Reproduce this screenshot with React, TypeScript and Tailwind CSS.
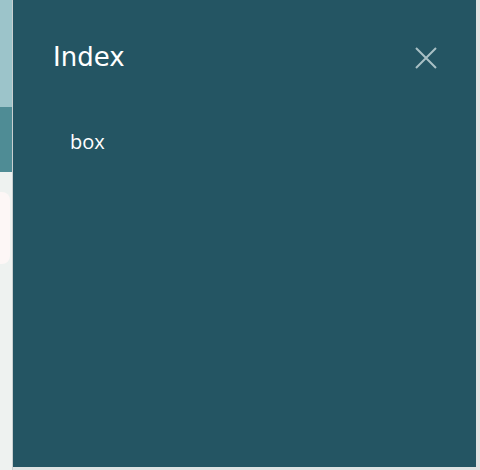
import React from "react";

export default function App() {
  return (
    <div className="flex h-[470px] w-[480px] bg-[#dfe3e3]">
      <div className="flex w-[13px] flex-col border-r border-[#c9cfd0]">
        <div className="h-[107px] bg-[#9cc4ca]" />
        <div className="h-[65px] bg-[#4f8c95]" />
        <div className="flex flex-1 flex-col bg-[#eef2f0] pt-[20px]">
          <div className="h-[72px] w-[10px] rounded-r-[8px] bg-[#fdf7f6]" />
        </div>
      </div>
      <div className="flex h-[467px] flex-1 flex-col bg-[#245563]">
        <div className="flex items-center justify-between pl-[40px] pr-[38px] pt-[41px]">
          <span className="font-['DejaVu_Sans',sans-serif] text-[26px] leading-[32px] text-white">Index</span>
          <svg width="24" height="24" viewBox="0 0 24 24" className="-mb-[2px]">
            <path d="M2 2 L22 22 M22 2 L2 22" stroke="#a9c0c5" strokeWidth="2" fill="none" />
          </svg>
        </div>
        <div className="pl-[57px] pt-[57px]">
          <span className="font-['Open_Sans',sans-serif] text-[20px] leading-[24px] text-white">box</span>
        </div>
      </div>
      <div className="w-[4px] bg-[#e4e1e1]" />
    </div>
  );
}
